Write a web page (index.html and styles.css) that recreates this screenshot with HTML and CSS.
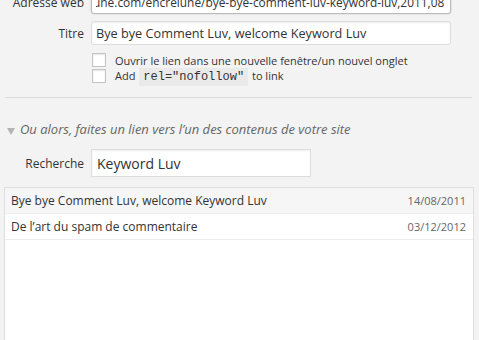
FILE: index.html
```html
<!DOCTYPE html>
<html lang="fr">
<head>
  <meta charset="UTF-8" />
  <title>Insérer/modifier un lien</title>
  <link rel="stylesheet" href="styles.css">
</head>
<body>
  <div class="link-options">
    <div class="field">
      <label class="field-label" for="url-field">Adresse web</label>
      <input class="field-input url" id="url-field" type="text" value="une.com/encrelune/bye-bye-comment-luv-keyword-luv,2011,08" />
    </div>
    <div class="field">
      <label class="field-label" for="title-field">Titre</label>
      <input class="field-input" id="title-field" type="text" value="Bye bye Comment Luv, welcome Keyword Luv" />
    </div>
    <div class="check-row">
      <span class="box"></span>
      <span>Ouvrir le lien dans une nouvelle fenêtre/un nouvel onglet</span>
    </div>
    <div class="check-row">
      <span class="box"></span>
      <span>Add <code>rel="nofollow"</code> to link</span>
    </div>
  </div>

  <div class="internal">
    <div class="toggle"><span class="arrow"></span>Ou alors, faites un lien vers l’un des contenus de votre site</div>
    <div class="field search">
      <label class="field-label" for="search-field">Recherche</label>
      <input class="field-input search-input" id="search-field" type="text" value="Keyword Luv" />
    </div>
    <ul class="results">
      <li class="alt"><span class="item-title">Bye bye Comment Luv, welcome Keyword Luv</span><span class="item-date">14/08/2011</span></li>
      <li><span class="item-title">De l’art du spam de commentaire</span><span class="item-date">03/12/2012</span></li>
    </ul>
  </div>
</body>
</html>
```

FILE: styles.css
```css
* {
  box-sizing: border-box;
  margin: 0;
  padding: 0;
}

body {
  background: #f3f3f3;
  color: #333;
  font-family: 'Open Sans', sans-serif;
  font-size: 13px;
  overflow: hidden;
}

.link-options {
  margin-top: -10px;
  padding-bottom: 13px;
  margin-left: 5px;
  margin-right: 7px;
  border-bottom: 1px solid #dcdcdc;
}

.field {
  display: flex;
  align-items: center;
  gap: 7px;
  margin-bottom: 7px;
}

.field-label {
  width: 79px;
  text-align: right;
  color: #333;
  font-size: 12px;
}

.field-input {
  width: 360px;
  height: 24px;
  padding: 0 4px;
  border: 1px solid #ddd;
  border-radius: 3px;
  background: #fff;
  box-shadow: inset 0 1px 2px rgba(0, 0, 0, 0.07);
  font-family: 'Open Sans', sans-serif;
  font-size: 12.7px;
  color: #333;
}

.url {
  border-color: #bbb;
  font-size: 11.9px;
  text-indent: -3px;
  box-shadow: 0 0 2px rgba(0, 0, 0, 0.2);
}

.check-row {
  display: flex;
  align-items: center;
  gap: 9px;
  margin-left: 87px;
  height: 16px;
  font-size: 11px;
}

.box {
  width: 14px;
  height: 14px;
  border: 1px solid #c4c4c4;
  background: #fff;
  box-shadow: inset 0 1px 2px rgba(0, 0, 0, 0.1);
}

code {
  background: #eaeaea;
  padding: 2px 4px;
  margin: 0 1px;
  font-family: 'Liberation Mono', monospace;
  font-size: 12px;
}

.internal {
  padding-top: 22px;
}

.toggle {
  font-style: italic;
  color: #666;
  padding-left: 7px;
  margin-bottom: 11px;
}

.arrow {
  display: inline-block;
  width: 0;
  height: 0;
  border-left: 4px solid transparent;
  border-right: 4px solid transparent;
  border-top: 7px solid #b4b4b4;
  margin-right: 5px;
  vertical-align: -1px;
}

.search .field-label {
  width: 79px;
  margin-left: 5px;
}

.search-input {
  width: 220px;
  height: 28px;
  padding: 0 5px;
  font-size: 14px;
  border-radius: 0;
}

.search {
  margin-bottom: 10px;
}

.results {
  list-style: none;
  margin-left: 4px;
  width: 470px;
  height: 200px;
  background: #fff;
  border: 1px solid #dfdfdf;
}

.results li {
  display: flex;
  justify-content: space-between;
  align-items: center;
  height: 26px;
  padding: 0 7px 0 6px;
  border-bottom: 1px solid #eee;
}

.results li.alt {
  background: #f6f6f6;
}

.item-title {
  font-size: 12px;
}

.item-date {
  color: #666;
  font-size: 11px;
}
```
